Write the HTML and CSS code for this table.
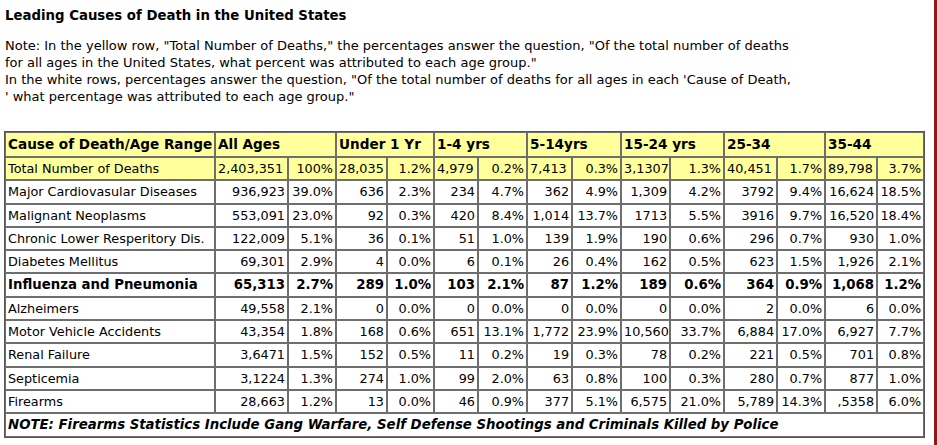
FILE: index.html
```html
<!DOCTYPE html>
<html>
<head>
<meta charset="utf-8">
<title>Leading Causes of Death in the United States</title>
<link rel="stylesheet" href="styles.css">
</head>
<body>
<div class="page">
  <h1 class="title">Leading Causes of Death in the United States</h1>
  <p class="note">Note: In the yellow row, "Total Number of Deaths," the percentages answer the question, "Of the total number of deaths<br>for all ages in the United States, what percent was attributed to each age group."<br>In the white rows, percentages answer the question, "Of the total number of deaths for all ages in each 'Cause of Death,<br>' what percentage was attributed to each age group."</p>
  <table class="stats">
    <colgroup>
      <col class="c-label">
      <col class="c-a1"><col class="c-a2">
      <col class="c-b1"><col class="c-b2">
      <col class="c-c1"><col class="c-c2">
      <col class="c-d1"><col class="c-d2">
      <col class="c-e1"><col class="c-e2">
      <col class="c-f1"><col class="c-f2">
      <col class="c-g1"><col class="c-g2">
    </colgroup>
    <tr class="head">
      <th>Cause of Death/Age Range</th>
      <th colspan="2">All Ages</th>
      <th colspan="2">Under 1 Yr</th>
      <th colspan="2">1-4 yrs</th>
      <th colspan="2">5-14yrs</th>
      <th colspan="2">15-24 yrs</th>
      <th colspan="2">25-34</th>
      <th colspan="2">35-44</th>
    </tr>
    <tr class="total">
      <td>Total Number of Deaths</td>
      <td class="n">2,403,351</td><td class="p">100%</td>
      <td class="n">28,035</td><td class="p">1.2%</td>
      <td class="n">4,979</td><td class="p">0.2%</td>
      <td class="n">7,413</td><td class="p">0.3%</td>
      <td class="n">3,1307</td><td class="p">1.3%</td>
      <td class="n">40,451</td><td class="p">1.7%</td>
      <td class="n">89,798</td><td class="p">3.7%</td>
    </tr>
    <tr>
      <td>Major Cardiovasular Diseases</td>
      <td class="n">936,923</td><td class="p">39.0%</td>
      <td class="n">636</td><td class="p">2.3%</td>
      <td class="n">234</td><td class="p">4.7%</td>
      <td class="n">362</td><td class="p">4.9%</td>
      <td class="n">1,309</td><td class="p">4.2%</td>
      <td class="n">3792</td><td class="p">9.4%</td>
      <td class="n">16,624</td><td class="p">18.5%</td>
    </tr>
    <tr>
      <td>Malignant Neoplasms</td>
      <td class="n">553,091</td><td class="p">23.0%</td>
      <td class="n">92</td><td class="p">0.3%</td>
      <td class="n">420</td><td class="p">8.4%</td>
      <td class="n">1,014</td><td class="p">13.7%</td>
      <td class="n">1713</td><td class="p">5.5%</td>
      <td class="n">3916</td><td class="p">9.7%</td>
      <td class="n">16,520</td><td class="p">18.4%</td>
    </tr>
    <tr>
      <td>Chronic Lower Resperitory Dis.</td>
      <td class="n">122,009</td><td class="p">5.1%</td>
      <td class="n">36</td><td class="p">0.1%</td>
      <td class="n">51</td><td class="p">1.0%</td>
      <td class="n">139</td><td class="p">1.9%</td>
      <td class="n">190</td><td class="p">0.6%</td>
      <td class="n">296</td><td class="p">0.7%</td>
      <td class="n">930</td><td class="p">1.0%</td>
    </tr>
    <tr>
      <td>Diabetes Mellitus</td>
      <td class="n">69,301</td><td class="p">2.9%</td>
      <td class="n">4</td><td class="p">0.0%</td>
      <td class="n">6</td><td class="p">0.1%</td>
      <td class="n">26</td><td class="p">0.4%</td>
      <td class="n">162</td><td class="p">0.5%</td>
      <td class="n">623</td><td class="p">1.5%</td>
      <td class="n">1,926</td><td class="p">2.1%</td>
    </tr>
    <tr class="strong">
      <td>Influenza and Pneumonia</td>
      <td class="n">65,313</td><td class="p">2.7%</td>
      <td class="n">289</td><td class="p">1.0%</td>
      <td class="n">103</td><td class="p">2.1%</td>
      <td class="n">87</td><td class="p">1.2%</td>
      <td class="n">189</td><td class="p">0.6%</td>
      <td class="n">364</td><td class="p">0.9%</td>
      <td class="n">1,068</td><td class="p">1.2%</td>
    </tr>
    <tr>
      <td>Alzheimers</td>
      <td class="n">49,558</td><td class="p">2.1%</td>
      <td class="n">0</td><td class="p">0.0%</td>
      <td class="n">0</td><td class="p">0.0%</td>
      <td class="n">0</td><td class="p">0.0%</td>
      <td class="n">0</td><td class="p">0.0%</td>
      <td class="n">2</td><td class="p">0.0%</td>
      <td class="n">6</td><td class="p">0.0%</td>
    </tr>
    <tr>
      <td>Motor Vehicle Accidents</td>
      <td class="n">43,354</td><td class="p">1.8%</td>
      <td class="n">168</td><td class="p">0.6%</td>
      <td class="n">651</td><td class="p">13.1%</td>
      <td class="n">1,772</td><td class="p">23.9%</td>
      <td class="n">10,560</td><td class="p">33.7%</td>
      <td class="n">6,884</td><td class="p">17.0%</td>
      <td class="n">6,927</td><td class="p">7.7%</td>
    </tr>
    <tr>
      <td>Renal Failure</td>
      <td class="n">3,6471</td><td class="p">1.5%</td>
      <td class="n">152</td><td class="p">0.5%</td>
      <td class="n">11</td><td class="p">0.2%</td>
      <td class="n">19</td><td class="p">0.3%</td>
      <td class="n">78</td><td class="p">0.2%</td>
      <td class="n">221</td><td class="p">0.5%</td>
      <td class="n">701</td><td class="p">0.8%</td>
    </tr>
    <tr>
      <td>Septicemia</td>
      <td class="n">3,1224</td><td class="p">1.3%</td>
      <td class="n">274</td><td class="p">1.0%</td>
      <td class="n">99</td><td class="p">2.0%</td>
      <td class="n">63</td><td class="p">0.8%</td>
      <td class="n">100</td><td class="p">0.3%</td>
      <td class="n">280</td><td class="p">0.7%</td>
      <td class="n">877</td><td class="p">1.0%</td>
    </tr>
    <tr>
      <td>Firearms</td>
      <td class="n">28,663</td><td class="p">1.2%</td>
      <td class="n">13</td><td class="p">0.0%</td>
      <td class="n">46</td><td class="p">0.9%</td>
      <td class="n">377</td><td class="p">5.1%</td>
      <td class="n">6,575</td><td class="p">21.0%</td>
      <td class="n">5,789</td><td class="p">14.3%</td>
      <td class="n">,5358</td><td class="p">6.0%</td>
    </tr>
    <tr class="foot">
      <td colspan="15">NOTE: Firearms Statistics Include Gang Warfare, Self Defense Shootings and Criminals Killed by Police</td>
    </tr>
  </table>
</div>
</body>
</html>
```
FILE: styles.css
```css
html, body {
  margin: 0;
  padding: 0;
  background: #ffffff;
}

.page {
  box-sizing: border-box;
  width: 937px;
  min-height: 445px;
  padding: 7px 0 0 5px;
  border-right: 3px solid #9a1414;
  font-family: "DejaVu Sans", Verdana, sans-serif;
  color: #000000;
}

.title {
  margin: 0;
  font-size: 13.3px;
  line-height: 17px;
  font-weight: bold;
}

.note {
  margin: 13px 0 0 0;
  font-size: 13px;
  line-height: 17px;
}

.stats {
  margin: 26px 0 0 -1px;
  table-layout: fixed;
  width: 921px;
  border-collapse: separate;
  border-spacing: 0;
  border: 1px solid #555555;
  font-size: 12.8px;
}

.c-label { width: 210px; }
.c-a1 { width: 73px; }
.c-a2 { width: 48px; }
.c-b1 { width: 51px; }
.c-b2 { width: 47px; }
.c-c1 { width: 44px; }
.c-c2 { width: 49px; }
.c-d1 { width: 45px; }
.c-d2 { width: 49px; }
.c-e1 { width: 49px; }
.c-e2 { width: 54px; }
.c-f1 { width: 53px; }
.c-f2 { width: 48px; }
.c-g1 { width: 52px; }
.c-g2 { width: 47px; }

.stats th,
.stats td {
  border: 1px solid #6e6e6e;
  padding: 2px 2px 2px 2px;
  height: 17.3px;
  line-height: 17.3px;
  white-space: nowrap;
  overflow: hidden;
  text-align: left;
  vertical-align: middle;
}

.stats th {
  font-size: 13.6px;
  font-weight: bold;
  height: 19px;
  line-height: 19px;
  background: #ffff9c;
}

.stats .n,
.stats .p {
  text-align: right;
}

.total td {
  background: #ffff9c;
}

.total .n {
  text-align: left;
}

.strong td {
  font-weight: bold;
  font-size: 13.3px;
}

.foot td {
  font-weight: bold;
  font-style: italic;
  font-size: 13.3px;
}
```
